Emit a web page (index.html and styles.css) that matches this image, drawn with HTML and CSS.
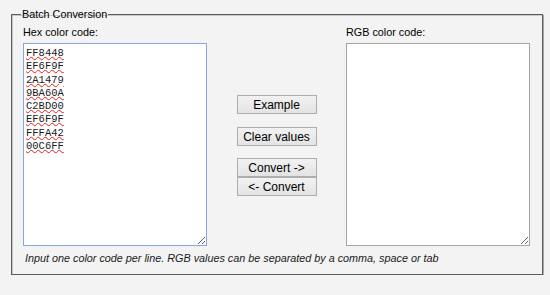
FILE: index.html
```html
<!DOCTYPE html>
<html lang="en">
<head>
    <meta charset="UTF-8">
    <meta name="viewport" content="width=device-width, initial-scale=1.0">
    <title>Batch Conversion</title>
    <link rel="stylesheet" href="styles.css">
</head>
<body>
    <div class="page">
        <fieldset class="batch">
            <legend>Batch Conversion</legend>
            <div class="columns">
                <div class="column">
                    <label for="hexInput">Hex color code:</label>
                    <textarea id="hexInput" class="codes hex" spellcheck="false">FF8448
EF6F9F
2A1479
9BA60A
C2BD00
EF6F9F
FFFA42
00C6FF</textarea>
                </div>
                <div class="actions">
                    <button type="button" class="btn btn-example">Example</button>
                    <button type="button" class="btn btn-clear">Clear values</button>
                    <button type="button" class="btn">Convert -&gt;</button>
                    <button type="button" class="btn">&lt;- Convert</button>
                </div>
                <div class="column">
                    <label for="rgbInput">RGB color code:</label>
                    <textarea id="rgbInput" class="codes" spellcheck="false"></textarea>
                </div>
            </div>
            <p class="note">Input one color code per line. RGB values can be separated by a comma, space or tab</p>
        </fieldset>
    </div>
</body>
</html>
```

FILE: styles.css
```css
body {
    margin: 0;
    font-family: "Liberation Sans", Arial, sans-serif;
    background-color: #f3f3f3;
    color: #000;
}

.page {
    padding: 8px 0 0 11px;
}

.batch {
    box-sizing: border-box;
    width: 532px;
    margin: 0;
    padding: 6px 12px 9px 11px;
    border: 1px solid #5c5c5c;
    box-shadow: 1px 1px 0 #a8a8a8, inset 1px 1px 0 #c8c8c8;
    min-width: 0;
}

.batch legend {
    padding: 0 1px;
    margin-left: -2px;
    font-size: 10.8px;
    line-height: 12px;
}

.columns {
    display: flex;
}

.column {
    display: flex;
    flex-direction: column;
    width: 184px;
}

label {
    font-size: 10.8px;
    line-height: 13px;
    margin-bottom: 4px;
}

.codes {
    display: block;
    box-sizing: border-box;
    width: 184px;
    height: 203px;
    margin: 0;
    padding: 3px 2px;
    border: 1px solid #a5a5a5;
    background: #fff;
    font-family: "Liberation Mono", "DejaVu Sans Mono", monospace;
    font-size: 10.5px;
    line-height: 13.3px;
    color: #1a1a1a;
    resize: both;
    outline: none;
}

.hex {
    border-color: #86a6dc;
    text-decoration: underline wavy #e0201c;
    text-decoration-thickness: 1px;
    text-underline-offset: 0;
}

.actions {
    flex: 1;
    display: flex;
    flex-direction: column;
    align-items: center;
    padding-top: 69px;
}

.btn {
    box-sizing: border-box;
    width: 80px;
    height: 19px;
    padding: 0 4px;
    border: 1px solid #adadad;
    border-radius: 0;
    background: linear-gradient(#f2f2f2, #e3e3e3);
    font-family: "Liberation Sans", Arial, sans-serif;
    font-size: 12px;
    color: #000;
    cursor: pointer;
}

.btn:hover {
    background: linear-gradient(#eaf4fc, #d6eaf8);
    border-color: #7eb4ea;
}

.btn-example {
    margin-bottom: 13px;
}

.btn-clear {
    margin-bottom: 12px;
}

.note {
    margin: 6px 0 0 2px;
    font-size: 10.8px;
    line-height: 13px;
    font-style: italic;
    color: #1a1a1a;
}
```
